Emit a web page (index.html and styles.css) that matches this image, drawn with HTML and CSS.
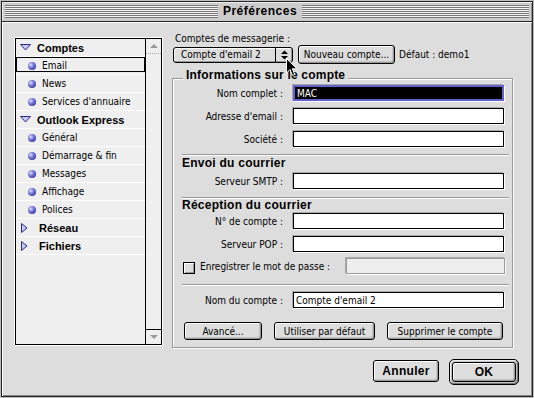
FILE: index.html
```html
<!DOCTYPE html>
<html lang="fr">
  <head>
    <meta charset="UTF-8" />
    <title>Préférences</title>
    <link rel="stylesheet" href="styles.css">
  </head>
  <body>
    <div class="window">
      <div class="titlebar">
        <div class="stripes stripes-left"></div>
        <div class="title">Préférences</div>
        <div class="stripes stripes-right"></div>
      </div>
      <div class="content">
        <div class="main">
          <div class="sidebar">
            <ul class="tree">
              <li class="head"><svg class="tri" width="11" height="7" viewBox="0 0 11 7"><polygon points="0.5,0.5 10.5,0.5 5.5,6" fill="#c8c8ff" stroke="#2a2a80"/></svg>Comptes</li>
              <li class="item selected"><span class="dot"></span>Email</li>
              <li class="item"><span class="dot"></span>News</li>
              <li class="item"><span class="dot"></span>Services d'annuaire</li>
              <li class="head"><svg class="tri" width="11" height="7" viewBox="0 0 11 7"><polygon points="0.5,0.5 10.5,0.5 5.5,6" fill="#c8c8ff" stroke="#2a2a80"/></svg>Outlook Express</li>
              <li class="item"><span class="dot"></span>Général</li>
              <li class="item"><span class="dot"></span>Démarrage &amp; fin</li>
              <li class="item"><span class="dot"></span>Messages</li>
              <li class="item"><span class="dot"></span>Affichage</li>
              <li class="item"><span class="dot"></span>Polices</li>
              <li class="head closed"><svg class="tri" width="7" height="10" viewBox="0 0 7 10"><polygon points="0.5,0.5 6,5 0.5,9.5" fill="#c8c8ff" stroke="#2a2a80"/></svg>Réseau</li>
              <li class="head closed"><svg class="tri" width="7" height="10" viewBox="0 0 7 10"><polygon points="0.5,0.5 6,5 0.5,9.5" fill="#c8c8ff" stroke="#2a2a80"/></svg>Fichiers</li>
            </ul>
            <div class="scrollbar">
              <div class="arrow arrow-up"><svg width="8" height="4" viewBox="0 0 8 4"><polygon points="0,4 8,4 4,0" fill="#999"/></svg></div>
              <div class="track"></div>
              <div class="arrow arrow-down"><svg width="8" height="4" viewBox="0 0 8 4"><polygon points="0,0 8,0 4,4" fill="#999"/></svg></div>
            </div>
          </div>

          <div class="panel">
            <div class="caption">Comptes de messagerie :</div>
            <div class="account-row">
              <div class="popup">
                <span class="popup-value">Compte d'email 2</span>
                <span class="popup-arrows"><svg width="7" height="10" viewBox="0 0 7 10"><polygon points="0,4 7,4 3.5,0.5" fill="#000"/><polygon points="0,6 7,6 3.5,9.5" fill="#000"/></svg></span>
              </div>
              <button class="btn btn-new">Nouveau compte...</button>
              <span class="default">Défaut : demo1</span>
            </div>

            <div class="group">
              <div class="group-title">Informations sur le compte</div>
              <div class="fields first">
                <label>Nom complet :</label><input class="field focus" type="text" value="MAC">
                <label>Adresse d'email :</label><input class="field" type="text">
                <label>Société :</label><input class="field" type="text">
              </div>
              <div class="sep sep-1"></div>
              <div class="section">Envoi du courrier</div>
              <div class="fields after-section">
                <label>Serveur SMTP :</label><input class="field" type="text">
              </div>
              <div class="sep sep-2"></div>
              <div class="section section-2">Réception du courrier</div>
              <div class="fields after-section-2">
                <label>N° de compte :</label><input class="field" type="text">
                <label>Serveur POP :</label><input class="field" type="text">
              </div>
              <div class="password-row">
                <span class="checkbox"></span>
                <span class="password-label">Enregistrer le mot de passe :</span>
                <input class="field disabled" type="text" disabled>
              </div>
              <div class="sep sep-3"></div>
              <div class="fields account-name">
                <label>Nom du compte :</label><input class="field" type="text" value="Compte d'email 2">
              </div>
              <div class="group-buttons">
                <button class="btn btn-adv">Avancé...</button>
                <button class="btn btn-default">Utiliser par défaut</button>
                <button class="btn btn-delete">Supprimer le compte</button>
              </div>
            </div>
          </div>
        </div>

        <div class="footer">
          <button class="btn btn-bold btn-cancel">Annuler</button>
          <div class="ok-ring"><button class="btn btn-bold btn-ok">OK</button></div>
        </div>
      </div>
    </div>

    <svg class="cursor" width="12" height="19" viewBox="0 0 12 19"><polygon points="0.5,0.5 0.5,15 4,11.5 6.5,17.5 8.8,16.5 6.3,10.8 11,10.8" fill="#000" stroke="#fff" stroke-width="1"/></svg>
  </body>
</html>
```

FILE: styles.css
```css
* {
  margin: 0;
  padding: 0;
  box-sizing: border-box;
}
body {
  background: #bdbdbd;
  padding-top: 1px;
  font-family: "DejaVu Sans Condensed", "DejaVu Sans", sans-serif;
  font-stretch: condensed;
  font-size: 10px;
  color: #000;
  position: relative;
}
.window {
  width: 532px;
  height: 396px;
  margin-left: 1px;
  border: 1px solid #222;
  display: flex;
  flex-direction: column;
}

/* title bar */
.titlebar {
  height: 20px;
  flex-shrink: 0;
  display: flex;
  align-items: flex-start;
  padding: 3px 3px 0 3px;
  background: #cccccc;
  border-bottom: 1px solid #222;
  box-shadow: inset 1px 1px 0 #eee, inset -1px 0 0 #999;
}
.stripes {
  height: 13px;
  background: repeating-linear-gradient(to bottom, #777 0 1px, #f4f4f4 1px 2px);
}
.stripes-left {
  width: 213px;
}
.stripes-right {
  flex: 1;
}
.title {
  width: 84px;
  margin-top: -3px;
  line-height: 19px;
  text-align: center;
  font-family: "Liberation Sans", Arial, sans-serif;
  font-stretch: normal;
  font-weight: bold;
  font-size: 12px;
  letter-spacing: 0.5px;
}

/* content */
.content {
  flex: 1;
  background: #dddddd;
  box-shadow: inset 1px 1px 0 #fff, inset -1px -1px 0 #888;
  display: flex;
  flex-direction: column;
}
.main {
  display: flex;
  gap: 10px;
  padding: 11px 0 0 13px;
}

/* sidebar list */
.sidebar {
  width: 147px;
  height: 307px;
  margin-top: 5px;
  border: 1px solid #000;
  background: #efefef;
  box-shadow: 0 0 0 1px #fff;
  display: flex;
}
.tree {
  list-style: none;
  flex: 1;
}
.tree li {
  height: 18px;
  display: flex;
  align-items: center;
  border-bottom: 1px solid #fff;
  white-space: nowrap;
}
.head {
  padding-left: 4px;
  font-family: "Liberation Sans", Arial, sans-serif;
  font-stretch: normal;
  font-weight: bold;
  font-size: 11px;
}
.head .tri {
  margin-right: 6px;
}
.head.closed {
  padding-left: 5px;
}
.head.closed .tri {
  margin-right: 11px;
}
.item {
  padding-left: 12px;
}
.item.selected {
  position: relative;
}
.item.selected::after {
  content: "";
  position: absolute;
  left: 0;
  right: 0;
  top: 0;
  bottom: 2px;
  border: 1px solid #000;
}
.dot {
  width: 8px;
  height: 8px;
  border-radius: 50%;
  margin-right: 6px;
  background: radial-gradient(circle at 35% 35%, #e4e4ff 0, #8080e0 35%, #3c3ca0 75%, #202060 100%);
}
.scrollbar {
  width: 16px;
  border-left: 1px solid #000;
  display: flex;
  flex-direction: column;
}
.arrow {
  height: 15px;
  display: flex;
  align-items: center;
  justify-content: center;
}
.arrow-up {
  border-bottom: 1px dotted #aaa;
}
.arrow-down {
  border-top: 1px solid #000;
}
.track {
  flex: 1;
}

/* right panel */
.panel {
  width: 341px;
}
.caption {
  line-height: 12px;
  padding-left: 3px;
}
.account-row {
  height: 19px;
  display: flex;
  align-items: center;
}
.popup {
  width: 120px;
  height: 16px;
  margin-left: 1px;
  border: 1px solid #000;
  border-radius: 3px;
  background: #dddddd;
  box-shadow: inset 1px 1px 0 #fff, inset -1px -1px 0 #999;
  display: flex;
  align-items: center;
}
.popup-value {
  flex: 1;
  padding-left: 7px;
}
.popup-arrows {
  width: 17px;
  height: 100%;
  border-left: 1px solid #000;
  display: flex;
  align-items: center;
  justify-content: center;
}
.btn {
  font-family: "DejaVu Sans Condensed", "DejaVu Sans", sans-serif;
  font-stretch: condensed;
  font-size: 10px;
  color: #000;
  height: 18px;
  border: 1px solid #000;
  border-radius: 3px;
  background: #dddddd;
  box-shadow: inset 1px 1px 0 #fff, inset -1px -1px 0 #999, inset -2px -2px 0 #c4c4c4;
}
.btn-new {
  width: 97px;
  height: 19px;
  margin-left: 5px;
}
.default {
  margin-left: 4px;
}

/* group box */
.group {
  margin-top: 14px;
  border: 1px solid #999;
  box-shadow: 1px 1px 0 #fff, inset 1px 1px 0 #fff;
  padding-bottom: 7px;
}
.group-title {
  width: fit-content;
  margin: -11px 0 0 10px;
  padding: 0 3px;
  background: #dddddd;
  line-height: 14px;
  font-family: "Liberation Sans", Arial, sans-serif;
  font-stretch: normal;
  font-weight: bold;
  font-size: 12px;
  letter-spacing: 0.2px;
}
.section {
  padding-left: 9px;
  line-height: 14px;
  font-family: "Liberation Sans", Arial, sans-serif;
  font-stretch: normal;
  font-weight: bold;
  font-size: 12px;
  letter-spacing: 0.25px;
}
.section-2 {
  margin-top: -1px;
}
.fields {
  display: grid;
  grid-template-columns: 110px 211px;
  column-gap: 10px;
  row-gap: 7px;
  align-items: center;
}
.fields label {
  text-align: right;
}
.fields.first {
  margin-top: 3px;
}
.fields.after-section {
  margin-top: 3px;
}
.fields.after-section-2 {
  margin-top: 1px;
}
.fields.account-name {
  margin-top: 6px;
}
.field {
  height: 16px;
  border: 1px solid #000;
  background: #fff;
  padding: 0 2px;
  font-family: "DejaVu Sans Condensed", "DejaVu Sans", sans-serif;
  font-stretch: condensed;
  font-size: 10px;
  color: #000;
  box-shadow: -1px -1px 0 #aaa, 1px 1px 0 #fff;
  outline: none;
}
.field.focus {
  border: 2px solid #6262cc;
  background: #000;
  color: #fff;
  padding-left: 2px;
}
.field.disabled {
  width: 159px;
  margin-left: auto;
  background: #eeeeee;
  border-color: #999;
}
.sep {
  height: 2px;
  margin: 0 3px 0 9px;
  border-top: 1px solid #999;
  border-bottom: 1px solid #fff;
}
.sep-1 {
  margin-top: 7px;
}
.sep-2 {
  margin-top: 8px;
}
.sep-3 {
  margin-top: 10px;
}
.password-row {
  height: 16px;
  margin-top: 6px;
  padding: 0 7px 0 10px;
  display: flex;
  align-items: center;
}
.checkbox {
  width: 12px;
  height: 12px;
  margin-top: 3px;
  border: 1px solid #000;
  background: #dddddd;
  box-shadow: inset 1px 1px 0 #fff, inset -1px -1px 0 #999;
}
.password-label {
  margin-left: 5px;
}
.group-buttons {
  margin-top: 14px;
  padding-left: 11px;
  display: flex;
  gap: 12px;
}
.btn-adv {
  width: 78px;
}
.btn-default {
  width: 101px;
}
.btn-delete {
  width: 116px;
}

/* footer */
.footer {
  margin-top: 11px;
  padding-right: 13px;
  display: flex;
  justify-content: flex-end;
  align-items: flex-start;
  gap: 10px;
}
.btn-bold {
  font-family: "Liberation Sans", Arial, sans-serif;
  font-stretch: normal;
  font-weight: bold;
  font-size: 12px;
  letter-spacing: 0.3px;
}
.btn-cancel {
  width: 66px;
  height: 22px;
  margin-top: 1px;
}
.ok-ring {
  width: 70px;
  height: 26px;
  padding: 2px;
  border: 1px solid #000;
  border-radius: 5px;
  background: #c4c4c4;
  box-shadow: inset 1px 1px 0 #eee, inset -1px -1px 0 #777;
}
.btn-ok {
  width: 64px;
  height: 20px;
}

/* mouse pointer over the popup */
.cursor {
  position: absolute;
  left: 286px;
  top: 58px;
}
```
